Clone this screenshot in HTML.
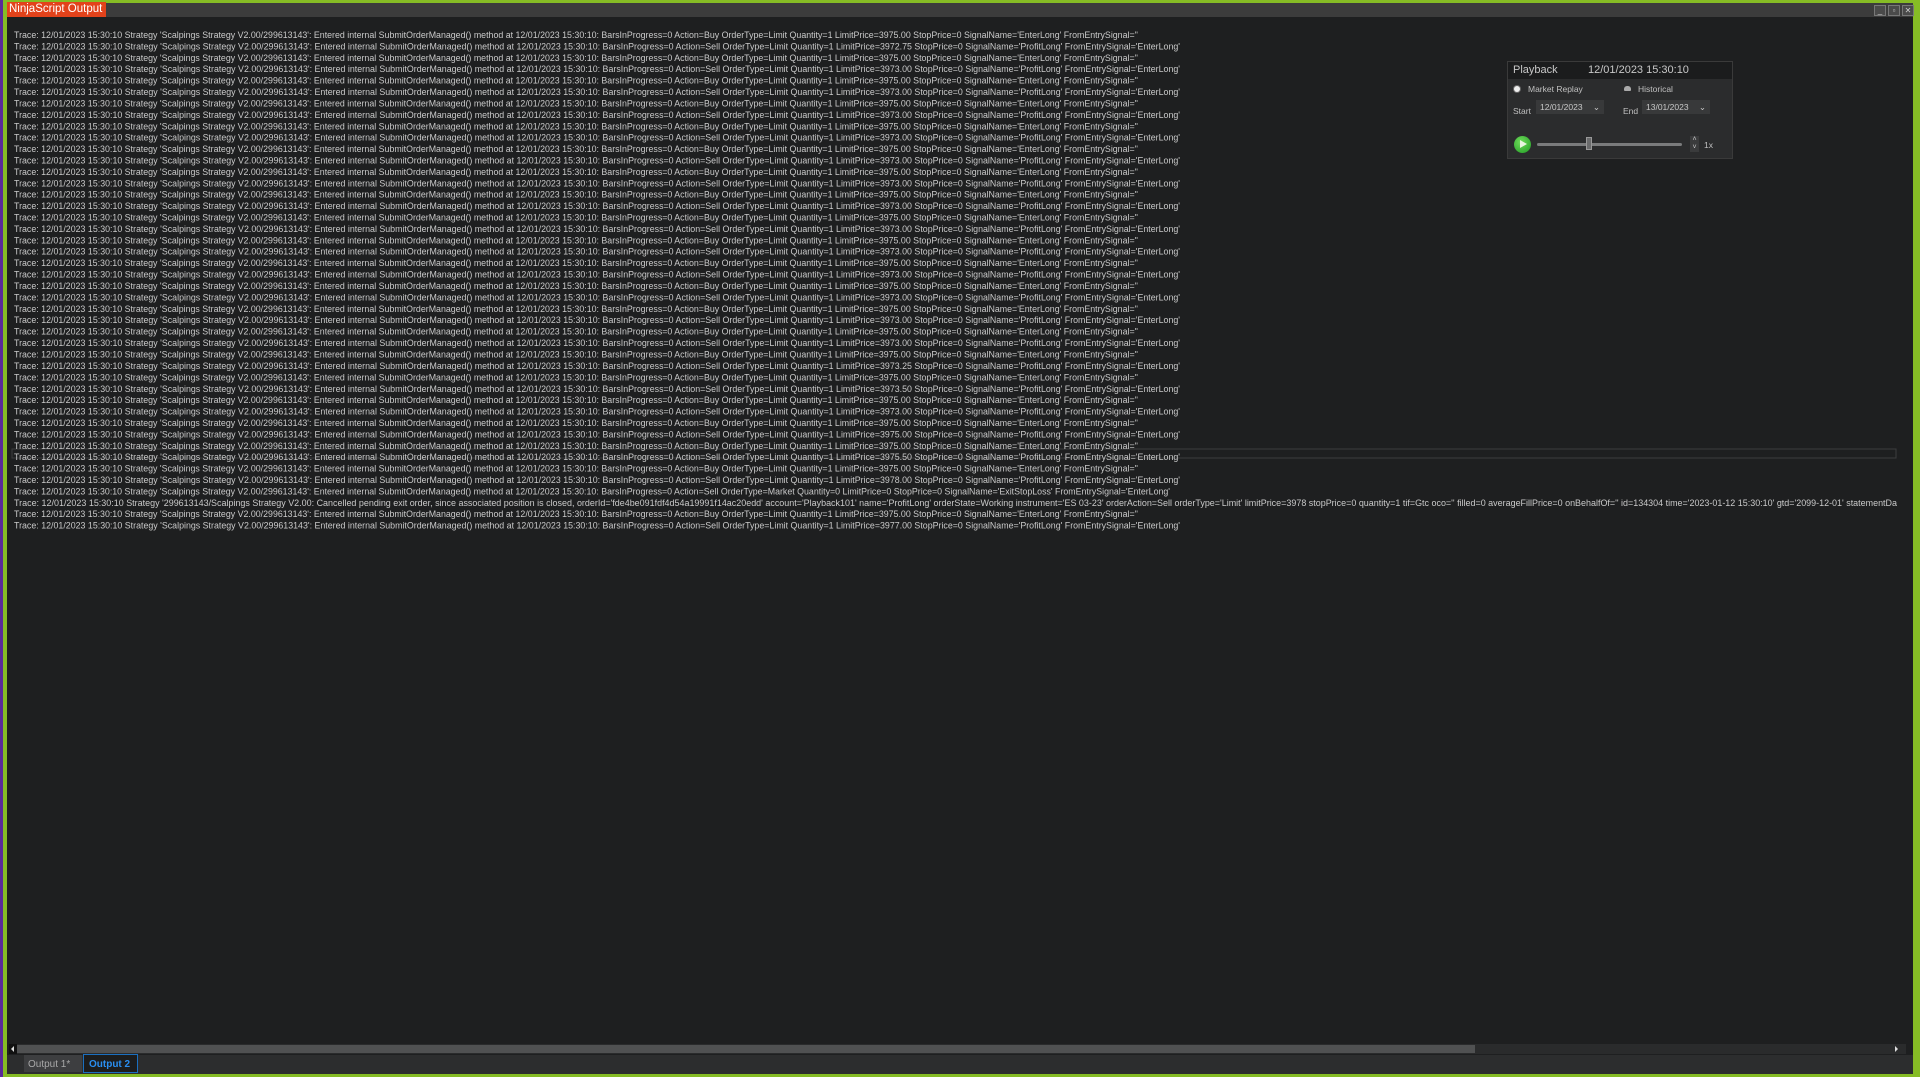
<!DOCTYPE html>
<html><head><meta charset="utf-8"><style>
html,body{margin:0;padding:0;width:1920px;height:1077px;overflow:hidden;background:#86bc25;font-family:"Liberation Sans",sans-serif}
.win{position:absolute;left:7px;top:3px;width:1906px;height:1071px;background:#1e1f20}
.lb{position:absolute;left:0;top:0;width:3px;height:1077px;background:#5a2a9a}
.tb{position:absolute;left:7px;top:3px;width:1906px;height:14px;background:#3c3c3c}
.tab{position:absolute;left:7px;top:2px;width:99px;height:15px;background:#e2421b;color:#fff;font-size:11.5px;line-height:15px;padding-left:2px;box-sizing:border-box}
.wb{position:absolute;top:5px;width:10px;height:9px;border:1px solid #777;background:#4a4a4a;color:#ccc;font-size:8px;line-height:9px;text-align:center}
svg text{fill:#cacaca;font-size:9.5px;font-family:"Liberation Sans",sans-serif}
.pb{position:absolute;left:1507px;top:61px;width:226px;height:98px;background:#2b2c2d;border:1px solid #3a3a3a;box-sizing:border-box;color:#c8c8c8}
.pbh{height:17px;background:#1b1c1d;font-size:11px;line-height:17px;padding-left:5px}
.sm{position:absolute;font-size:8.5px;color:#c0c0c0}
.dd{position:absolute;height:14px;background:#38393a;font-size:8.5px;line-height:14px;color:#c8c8c8;padding-left:4px;box-sizing:border-box}
</style></head><body>
<div class="lb"></div>
<div class="win"></div>
<div class="tb"></div>
<div class="tab">NinjaScript Output</div>
<div class="wb" style="left:1874px">_</div>
<div class="wb" style="left:1888px">▫</div>
<div class="wb" style="left:1902px">✕</div>

<svg style="position:absolute;left:0;top:0" width="1920" height="1077">
<rect x="12" y="449" width="1884" height="9" fill="none" stroke="#3c3d3e" stroke-width="1"/>
<g transform="matrix(1,0,0,1.0045,0,-0.2)">
<text x="14" y="38" textLength="1124" lengthAdjust="spacingAndGlyphs">Trace: 12/01/2023 15:30:10 Strategy 'Scalpings Strategy V2.00/299613143': Entered internal SubmitOrderManaged() method at 12/01/2023 15:30:10: BarsInProgress=0 Action=Buy OrderType=Limit Quantity=1 LimitPrice=3975.00 StopPrice=0 SignalName='EnterLong' FromEntrySignal=''</text>
<text x="14" y="49.4" textLength="1166" lengthAdjust="spacingAndGlyphs">Trace: 12/01/2023 15:30:10 Strategy 'Scalpings Strategy V2.00/299613143': Entered internal SubmitOrderManaged() method at 12/01/2023 15:30:10: BarsInProgress=0 Action=Sell OrderType=Limit Quantity=1 LimitPrice=3972.75 StopPrice=0 SignalName='ProfitLong' FromEntrySignal='EnterLong'</text>
<text x="14" y="60.7" textLength="1124" lengthAdjust="spacingAndGlyphs">Trace: 12/01/2023 15:30:10 Strategy 'Scalpings Strategy V2.00/299613143': Entered internal SubmitOrderManaged() method at 12/01/2023 15:30:10: BarsInProgress=0 Action=Buy OrderType=Limit Quantity=1 LimitPrice=3975.00 StopPrice=0 SignalName='EnterLong' FromEntrySignal=''</text>
<text x="14" y="72.1" textLength="1166" lengthAdjust="spacingAndGlyphs">Trace: 12/01/2023 15:30:10 Strategy 'Scalpings Strategy V2.00/299613143': Entered internal SubmitOrderManaged() method at 12/01/2023 15:30:10: BarsInProgress=0 Action=Sell OrderType=Limit Quantity=1 LimitPrice=3973.00 StopPrice=0 SignalName='ProfitLong' FromEntrySignal='EnterLong'</text>
<text x="14" y="83.4" textLength="1124" lengthAdjust="spacingAndGlyphs">Trace: 12/01/2023 15:30:10 Strategy 'Scalpings Strategy V2.00/299613143': Entered internal SubmitOrderManaged() method at 12/01/2023 15:30:10: BarsInProgress=0 Action=Buy OrderType=Limit Quantity=1 LimitPrice=3975.00 StopPrice=0 SignalName='EnterLong' FromEntrySignal=''</text>
<text x="14" y="94.8" textLength="1166" lengthAdjust="spacingAndGlyphs">Trace: 12/01/2023 15:30:10 Strategy 'Scalpings Strategy V2.00/299613143': Entered internal SubmitOrderManaged() method at 12/01/2023 15:30:10: BarsInProgress=0 Action=Sell OrderType=Limit Quantity=1 LimitPrice=3973.00 StopPrice=0 SignalName='ProfitLong' FromEntrySignal='EnterLong'</text>
<text x="14" y="106.2" textLength="1124" lengthAdjust="spacingAndGlyphs">Trace: 12/01/2023 15:30:10 Strategy 'Scalpings Strategy V2.00/299613143': Entered internal SubmitOrderManaged() method at 12/01/2023 15:30:10: BarsInProgress=0 Action=Buy OrderType=Limit Quantity=1 LimitPrice=3975.00 StopPrice=0 SignalName='EnterLong' FromEntrySignal=''</text>
<text x="14" y="117.5" textLength="1166" lengthAdjust="spacingAndGlyphs">Trace: 12/01/2023 15:30:10 Strategy 'Scalpings Strategy V2.00/299613143': Entered internal SubmitOrderManaged() method at 12/01/2023 15:30:10: BarsInProgress=0 Action=Sell OrderType=Limit Quantity=1 LimitPrice=3973.00 StopPrice=0 SignalName='ProfitLong' FromEntrySignal='EnterLong'</text>
<text x="14" y="128.9" textLength="1124" lengthAdjust="spacingAndGlyphs">Trace: 12/01/2023 15:30:10 Strategy 'Scalpings Strategy V2.00/299613143': Entered internal SubmitOrderManaged() method at 12/01/2023 15:30:10: BarsInProgress=0 Action=Buy OrderType=Limit Quantity=1 LimitPrice=3975.00 StopPrice=0 SignalName='EnterLong' FromEntrySignal=''</text>
<text x="14" y="140.2" textLength="1166" lengthAdjust="spacingAndGlyphs">Trace: 12/01/2023 15:30:10 Strategy 'Scalpings Strategy V2.00/299613143': Entered internal SubmitOrderManaged() method at 12/01/2023 15:30:10: BarsInProgress=0 Action=Sell OrderType=Limit Quantity=1 LimitPrice=3973.00 StopPrice=0 SignalName='ProfitLong' FromEntrySignal='EnterLong'</text>
<text x="14" y="151.6" textLength="1124" lengthAdjust="spacingAndGlyphs">Trace: 12/01/2023 15:30:10 Strategy 'Scalpings Strategy V2.00/299613143': Entered internal SubmitOrderManaged() method at 12/01/2023 15:30:10: BarsInProgress=0 Action=Buy OrderType=Limit Quantity=1 LimitPrice=3975.00 StopPrice=0 SignalName='EnterLong' FromEntrySignal=''</text>
<text x="14" y="163.0" textLength="1166" lengthAdjust="spacingAndGlyphs">Trace: 12/01/2023 15:30:10 Strategy 'Scalpings Strategy V2.00/299613143': Entered internal SubmitOrderManaged() method at 12/01/2023 15:30:10: BarsInProgress=0 Action=Sell OrderType=Limit Quantity=1 LimitPrice=3973.00 StopPrice=0 SignalName='ProfitLong' FromEntrySignal='EnterLong'</text>
<text x="14" y="174.3" textLength="1124" lengthAdjust="spacingAndGlyphs">Trace: 12/01/2023 15:30:10 Strategy 'Scalpings Strategy V2.00/299613143': Entered internal SubmitOrderManaged() method at 12/01/2023 15:30:10: BarsInProgress=0 Action=Buy OrderType=Limit Quantity=1 LimitPrice=3975.00 StopPrice=0 SignalName='EnterLong' FromEntrySignal=''</text>
<text x="14" y="185.7" textLength="1166" lengthAdjust="spacingAndGlyphs">Trace: 12/01/2023 15:30:10 Strategy 'Scalpings Strategy V2.00/299613143': Entered internal SubmitOrderManaged() method at 12/01/2023 15:30:10: BarsInProgress=0 Action=Sell OrderType=Limit Quantity=1 LimitPrice=3973.00 StopPrice=0 SignalName='ProfitLong' FromEntrySignal='EnterLong'</text>
<text x="14" y="197.0" textLength="1124" lengthAdjust="spacingAndGlyphs">Trace: 12/01/2023 15:30:10 Strategy 'Scalpings Strategy V2.00/299613143': Entered internal SubmitOrderManaged() method at 12/01/2023 15:30:10: BarsInProgress=0 Action=Buy OrderType=Limit Quantity=1 LimitPrice=3975.00 StopPrice=0 SignalName='EnterLong' FromEntrySignal=''</text>
<text x="14" y="208.4" textLength="1166" lengthAdjust="spacingAndGlyphs">Trace: 12/01/2023 15:30:10 Strategy 'Scalpings Strategy V2.00/299613143': Entered internal SubmitOrderManaged() method at 12/01/2023 15:30:10: BarsInProgress=0 Action=Sell OrderType=Limit Quantity=1 LimitPrice=3973.00 StopPrice=0 SignalName='ProfitLong' FromEntrySignal='EnterLong'</text>
<text x="14" y="219.8" textLength="1124" lengthAdjust="spacingAndGlyphs">Trace: 12/01/2023 15:30:10 Strategy 'Scalpings Strategy V2.00/299613143': Entered internal SubmitOrderManaged() method at 12/01/2023 15:30:10: BarsInProgress=0 Action=Buy OrderType=Limit Quantity=1 LimitPrice=3975.00 StopPrice=0 SignalName='EnterLong' FromEntrySignal=''</text>
<text x="14" y="231.1" textLength="1166" lengthAdjust="spacingAndGlyphs">Trace: 12/01/2023 15:30:10 Strategy 'Scalpings Strategy V2.00/299613143': Entered internal SubmitOrderManaged() method at 12/01/2023 15:30:10: BarsInProgress=0 Action=Sell OrderType=Limit Quantity=1 LimitPrice=3973.00 StopPrice=0 SignalName='ProfitLong' FromEntrySignal='EnterLong'</text>
<text x="14" y="242.5" textLength="1124" lengthAdjust="spacingAndGlyphs">Trace: 12/01/2023 15:30:10 Strategy 'Scalpings Strategy V2.00/299613143': Entered internal SubmitOrderManaged() method at 12/01/2023 15:30:10: BarsInProgress=0 Action=Buy OrderType=Limit Quantity=1 LimitPrice=3975.00 StopPrice=0 SignalName='EnterLong' FromEntrySignal=''</text>
<text x="14" y="253.8" textLength="1166" lengthAdjust="spacingAndGlyphs">Trace: 12/01/2023 15:30:10 Strategy 'Scalpings Strategy V2.00/299613143': Entered internal SubmitOrderManaged() method at 12/01/2023 15:30:10: BarsInProgress=0 Action=Sell OrderType=Limit Quantity=1 LimitPrice=3973.00 StopPrice=0 SignalName='ProfitLong' FromEntrySignal='EnterLong'</text>
<text x="14" y="265.2" textLength="1124" lengthAdjust="spacingAndGlyphs">Trace: 12/01/2023 15:30:10 Strategy 'Scalpings Strategy V2.00/299613143': Entered internal SubmitOrderManaged() method at 12/01/2023 15:30:10: BarsInProgress=0 Action=Buy OrderType=Limit Quantity=1 LimitPrice=3975.00 StopPrice=0 SignalName='EnterLong' FromEntrySignal=''</text>
<text x="14" y="276.6" textLength="1166" lengthAdjust="spacingAndGlyphs">Trace: 12/01/2023 15:30:10 Strategy 'Scalpings Strategy V2.00/299613143': Entered internal SubmitOrderManaged() method at 12/01/2023 15:30:10: BarsInProgress=0 Action=Sell OrderType=Limit Quantity=1 LimitPrice=3973.00 StopPrice=0 SignalName='ProfitLong' FromEntrySignal='EnterLong'</text>
<text x="14" y="287.9" textLength="1124" lengthAdjust="spacingAndGlyphs">Trace: 12/01/2023 15:30:10 Strategy 'Scalpings Strategy V2.00/299613143': Entered internal SubmitOrderManaged() method at 12/01/2023 15:30:10: BarsInProgress=0 Action=Buy OrderType=Limit Quantity=1 LimitPrice=3975.00 StopPrice=0 SignalName='EnterLong' FromEntrySignal=''</text>
<text x="14" y="299.3" textLength="1166" lengthAdjust="spacingAndGlyphs">Trace: 12/01/2023 15:30:10 Strategy 'Scalpings Strategy V2.00/299613143': Entered internal SubmitOrderManaged() method at 12/01/2023 15:30:10: BarsInProgress=0 Action=Sell OrderType=Limit Quantity=1 LimitPrice=3973.00 StopPrice=0 SignalName='ProfitLong' FromEntrySignal='EnterLong'</text>
<text x="14" y="310.6" textLength="1124" lengthAdjust="spacingAndGlyphs">Trace: 12/01/2023 15:30:10 Strategy 'Scalpings Strategy V2.00/299613143': Entered internal SubmitOrderManaged() method at 12/01/2023 15:30:10: BarsInProgress=0 Action=Buy OrderType=Limit Quantity=1 LimitPrice=3975.00 StopPrice=0 SignalName='EnterLong' FromEntrySignal=''</text>
<text x="14" y="322.0" textLength="1166" lengthAdjust="spacingAndGlyphs">Trace: 12/01/2023 15:30:10 Strategy 'Scalpings Strategy V2.00/299613143': Entered internal SubmitOrderManaged() method at 12/01/2023 15:30:10: BarsInProgress=0 Action=Sell OrderType=Limit Quantity=1 LimitPrice=3973.00 StopPrice=0 SignalName='ProfitLong' FromEntrySignal='EnterLong'</text>
<text x="14" y="333.4" textLength="1124" lengthAdjust="spacingAndGlyphs">Trace: 12/01/2023 15:30:10 Strategy 'Scalpings Strategy V2.00/299613143': Entered internal SubmitOrderManaged() method at 12/01/2023 15:30:10: BarsInProgress=0 Action=Buy OrderType=Limit Quantity=1 LimitPrice=3975.00 StopPrice=0 SignalName='EnterLong' FromEntrySignal=''</text>
<text x="14" y="344.7" textLength="1166" lengthAdjust="spacingAndGlyphs">Trace: 12/01/2023 15:30:10 Strategy 'Scalpings Strategy V2.00/299613143': Entered internal SubmitOrderManaged() method at 12/01/2023 15:30:10: BarsInProgress=0 Action=Sell OrderType=Limit Quantity=1 LimitPrice=3973.00 StopPrice=0 SignalName='ProfitLong' FromEntrySignal='EnterLong'</text>
<text x="14" y="356.1" textLength="1124" lengthAdjust="spacingAndGlyphs">Trace: 12/01/2023 15:30:10 Strategy 'Scalpings Strategy V2.00/299613143': Entered internal SubmitOrderManaged() method at 12/01/2023 15:30:10: BarsInProgress=0 Action=Buy OrderType=Limit Quantity=1 LimitPrice=3975.00 StopPrice=0 SignalName='EnterLong' FromEntrySignal=''</text>
<text x="14" y="367.4" textLength="1166" lengthAdjust="spacingAndGlyphs">Trace: 12/01/2023 15:30:10 Strategy 'Scalpings Strategy V2.00/299613143': Entered internal SubmitOrderManaged() method at 12/01/2023 15:30:10: BarsInProgress=0 Action=Sell OrderType=Limit Quantity=1 LimitPrice=3973.25 StopPrice=0 SignalName='ProfitLong' FromEntrySignal='EnterLong'</text>
<text x="14" y="378.8" textLength="1124" lengthAdjust="spacingAndGlyphs">Trace: 12/01/2023 15:30:10 Strategy 'Scalpings Strategy V2.00/299613143': Entered internal SubmitOrderManaged() method at 12/01/2023 15:30:10: BarsInProgress=0 Action=Buy OrderType=Limit Quantity=1 LimitPrice=3975.00 StopPrice=0 SignalName='EnterLong' FromEntrySignal=''</text>
<text x="14" y="390.2" textLength="1166" lengthAdjust="spacingAndGlyphs">Trace: 12/01/2023 15:30:10 Strategy 'Scalpings Strategy V2.00/299613143': Entered internal SubmitOrderManaged() method at 12/01/2023 15:30:10: BarsInProgress=0 Action=Sell OrderType=Limit Quantity=1 LimitPrice=3973.50 StopPrice=0 SignalName='ProfitLong' FromEntrySignal='EnterLong'</text>
<text x="14" y="401.5" textLength="1124" lengthAdjust="spacingAndGlyphs">Trace: 12/01/2023 15:30:10 Strategy 'Scalpings Strategy V2.00/299613143': Entered internal SubmitOrderManaged() method at 12/01/2023 15:30:10: BarsInProgress=0 Action=Buy OrderType=Limit Quantity=1 LimitPrice=3975.00 StopPrice=0 SignalName='EnterLong' FromEntrySignal=''</text>
<text x="14" y="412.9" textLength="1166" lengthAdjust="spacingAndGlyphs">Trace: 12/01/2023 15:30:10 Strategy 'Scalpings Strategy V2.00/299613143': Entered internal SubmitOrderManaged() method at 12/01/2023 15:30:10: BarsInProgress=0 Action=Sell OrderType=Limit Quantity=1 LimitPrice=3973.00 StopPrice=0 SignalName='ProfitLong' FromEntrySignal='EnterLong'</text>
<text x="14" y="424.2" textLength="1124" lengthAdjust="spacingAndGlyphs">Trace: 12/01/2023 15:30:10 Strategy 'Scalpings Strategy V2.00/299613143': Entered internal SubmitOrderManaged() method at 12/01/2023 15:30:10: BarsInProgress=0 Action=Buy OrderType=Limit Quantity=1 LimitPrice=3975.00 StopPrice=0 SignalName='EnterLong' FromEntrySignal=''</text>
<text x="14" y="435.6" textLength="1166" lengthAdjust="spacingAndGlyphs">Trace: 12/01/2023 15:30:10 Strategy 'Scalpings Strategy V2.00/299613143': Entered internal SubmitOrderManaged() method at 12/01/2023 15:30:10: BarsInProgress=0 Action=Sell OrderType=Limit Quantity=1 LimitPrice=3975.00 StopPrice=0 SignalName='ProfitLong' FromEntrySignal='EnterLong'</text>
<text x="14" y="447.0" textLength="1124" lengthAdjust="spacingAndGlyphs">Trace: 12/01/2023 15:30:10 Strategy 'Scalpings Strategy V2.00/299613143': Entered internal SubmitOrderManaged() method at 12/01/2023 15:30:10: BarsInProgress=0 Action=Buy OrderType=Limit Quantity=1 LimitPrice=3975.00 StopPrice=0 SignalName='EnterLong' FromEntrySignal=''</text>
<text x="14" y="458.3" textLength="1166" lengthAdjust="spacingAndGlyphs">Trace: 12/01/2023 15:30:10 Strategy 'Scalpings Strategy V2.00/299613143': Entered internal SubmitOrderManaged() method at 12/01/2023 15:30:10: BarsInProgress=0 Action=Sell OrderType=Limit Quantity=1 LimitPrice=3975.50 StopPrice=0 SignalName='ProfitLong' FromEntrySignal='EnterLong'</text>
<text x="14" y="469.7" textLength="1124" lengthAdjust="spacingAndGlyphs">Trace: 12/01/2023 15:30:10 Strategy 'Scalpings Strategy V2.00/299613143': Entered internal SubmitOrderManaged() method at 12/01/2023 15:30:10: BarsInProgress=0 Action=Buy OrderType=Limit Quantity=1 LimitPrice=3975.00 StopPrice=0 SignalName='EnterLong' FromEntrySignal=''</text>
<text x="14" y="481.0" textLength="1166" lengthAdjust="spacingAndGlyphs">Trace: 12/01/2023 15:30:10 Strategy 'Scalpings Strategy V2.00/299613143': Entered internal SubmitOrderManaged() method at 12/01/2023 15:30:10: BarsInProgress=0 Action=Sell OrderType=Limit Quantity=1 LimitPrice=3978.00 StopPrice=0 SignalName='ProfitLong' FromEntrySignal='EnterLong'</text>
<text x="14" y="492.4" textLength="1156" lengthAdjust="spacingAndGlyphs">Trace: 12/01/2023 15:30:10 Strategy 'Scalpings Strategy V2.00/299613143': Entered internal SubmitOrderManaged() method at 12/01/2023 15:30:10: BarsInProgress=0 Action=Sell OrderType=Market Quantity=0 LimitPrice=0 StopPrice=0 SignalName='ExitStopLoss' FromEntrySignal='EnterLong'</text>
<text x="14" y="503.8" textLength="1883" lengthAdjust="spacingAndGlyphs">Trace: 12/01/2023 15:30:10 Strategy '299613143/Scalpings Strategy V2.00: Cancelled pending exit order, since associated position is closed, orderId='fde4be091fdf4d54a19991f14ac20edd' account='Playback101' name='ProfitLong' orderState=Working instrument='ES 03-23' orderAction=Sell orderType='Limit' limitPrice=3978 stopPrice=0 quantity=1 tif=Gtc oco='' filled=0 averageFillPrice=0 onBehalfOf='' id=134304 time='2023-01-12 15:30:10' gtd='2099-12-01' statementDa</text>
<text x="14" y="515.1" textLength="1124" lengthAdjust="spacingAndGlyphs">Trace: 12/01/2023 15:30:10 Strategy 'Scalpings Strategy V2.00/299613143': Entered internal SubmitOrderManaged() method at 12/01/2023 15:30:10: BarsInProgress=0 Action=Buy OrderType=Limit Quantity=1 LimitPrice=3975.00 StopPrice=0 SignalName='EnterLong' FromEntrySignal=''</text>
<text x="14" y="526.5" textLength="1166" lengthAdjust="spacingAndGlyphs">Trace: 12/01/2023 15:30:10 Strategy 'Scalpings Strategy V2.00/299613143': Entered internal SubmitOrderManaged() method at 12/01/2023 15:30:10: BarsInProgress=0 Action=Sell OrderType=Limit Quantity=1 LimitPrice=3977.00 StopPrice=0 SignalName='ProfitLong' FromEntrySignal='EnterLong'</text>
</g>
<rect x="9" y="1044" width="1897" height="10" fill="#2a2b2c"/>
<rect x="17" y="1045" width="1458" height="8" fill="#505152"/>
<rect x="9" y="1044" width="8" height="10" fill="#111"/>
<path d="M14 1046 L11 1049 L14 1052Z" fill="#ddd"/>
<path d="M1895 1046 L1898 1049 L1895 1052Z" fill="#ddd"/>
<rect x="7" y="1055" width="1906" height="19" fill="#2c2d2e"/>
<rect x="24" y="1055" width="58" height="17" fill="#3d3e40"/>
<text x="28" y="1067" style="font-size:10px;fill:#a8a8a8">Output 1*</text>
<rect x="83.5" y="1054.5" width="54" height="18" fill="#1c1d1e" stroke="#1a6fc0" stroke-width="1"/>
<text x="89" y="1067" style="font-size:10px;fill:#2a8ef0;font-weight:bold">Output 2</text>
</svg>

<div class="pb">
<div class="pbh">Playback<span style="position:absolute;left:80px">12/01/2023 15:30:10</span></div>
<div style="position:absolute;left:6px;top:24px;width:6px;height:6px;border-radius:50%;background:#eee;box-shadow:0 0 0 1px #666"></div>
<div class="sm" style="left:20px;top:22px">Market Replay</div>
<div style="position:absolute;left:116px;top:24px;width:7px;height:5px;border-radius:3px 3px 1px 1px;background:#aaa"></div>
<div class="sm" style="left:130px;top:22px">Historical</div>
<div class="sm" style="left:5px;top:44px">Start</div>
<div class="dd" style="left:28px;top:38px;width:68px">12/01/2023 <span style="float:right;margin-right:4px">⌄</span></div>
<div class="sm" style="left:115px;top:44px">End</div>
<div class="dd" style="left:134px;top:38px;width:68px">13/01/2023 <span style="float:right;margin-right:4px">⌄</span></div>
<div style="position:absolute;left:6px;top:74px;width:17px;height:17px;border-radius:50%;background:radial-gradient(circle at 40% 35%,#6fdc5a,#1f9a24)"></div>
<div style="position:absolute;left:12px;top:78px;width:0;height:0;border-left:7px solid #e8f5e0;border-top:4.5px solid transparent;border-bottom:4.5px solid transparent"></div>
<div style="position:absolute;left:29px;top:81px;width:145px;height:3px;background:#7a7b7c;border-radius:2px"></div>
<div style="position:absolute;left:78px;top:75px;width:6px;height:13px;background:#6a6b6c;border:1px solid #999;box-sizing:border-box"></div>
<div style="position:absolute;left:182px;top:74px;width:9px;height:16px;background:#3a3b3c;color:#ccc;font-size:7px;line-height:8px;text-align:center">˄<br>˅</div>
<div class="sm" style="left:196px;top:78px">1x</div>
</div>
</body></html>
